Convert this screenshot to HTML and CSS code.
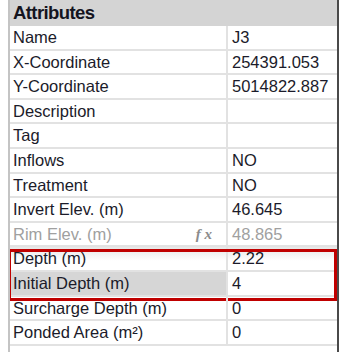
FILE: index.html
```html
<!DOCTYPE html>
<html lang="en">
<head>
    <meta charset="UTF-8">
    <title>Junction J3</title>
    <link rel="stylesheet" href="styles.css">
</head>
<body>
    <div class="panel">
        <div class="panel-header">Attributes</div>
        <div class="row"><div class="label">Name</div><div class="value">J3</div></div>
        <div class="row"><div class="label">X-Coordinate</div><div class="value">254391.053</div></div>
        <div class="row"><div class="label">Y-Coordinate</div><div class="value">5014822.887</div></div>
        <div class="row"><div class="label">Description</div><div class="value"></div></div>
        <div class="row"><div class="label">Tag</div><div class="value"></div></div>
        <div class="row"><div class="label">Inflows</div><div class="value">NO</div></div>
        <div class="row"><div class="label">Treatment</div><div class="value">NO</div></div>
        <div class="row"><div class="label">Invert Elev. (m)</div><div class="value">46.645</div></div>
        <div class="row disabled"><div class="label">Rim Elev. (m)<span class="fx">f x</span></div><div class="value">48.865</div></div>
        <div class="highlight">
            <div class="row shaded"><div class="label">Depth (m)</div><div class="value">2.22</div></div>
            <div class="row selected"><div class="label">Initial Depth (m)</div><div class="value">4</div></div>
        </div>
        <div class="row"><div class="label">Surcharge Depth (m)</div><div class="value">0</div></div>
        <div class="row"><div class="label">Ponded Area (m²)</div><div class="value">0</div></div>
    </div>
</body>
</html>
```

FILE: styles.css
```css
body {
    margin: 0;
    background-color: #ffffff;
    font-family: "Liberation Sans", Arial, sans-serif;
    font-size: 16.5px;
    color: #1b1b2a;
}

.panel {
    width: 331px;
    height: 352px;
    margin-left: 8px;
    border-left: 2px solid #c4c4c4;
    border-right: 2px solid #4a4a4a;
    box-sizing: border-box;
    overflow: hidden;
}

.panel-header {
    height: 26px;
    line-height: 26px;
    padding-left: 3px;
    background-color: #d4d4d4;
    font-weight: bold;
    font-size: 18.5px;
    letter-spacing: -0.6px;
    color: #14141f;
}

.row {
    display: flex;
    height: 24.6px;
    border-bottom: 2px solid #e2e2e2;
    box-sizing: border-box;
}

.label {
    position: relative;
    width: 213px;
    flex-shrink: 0;
    padding-left: 3px;
    line-height: 23px;
    border-right: 2px solid #e2e2e2;
    white-space: nowrap;
}

.value {
    flex: 1;
    padding-left: 4px;
    line-height: 23px;
}

.disabled {
    color: #a0a0a0;
}

.fx {
    position: absolute;
    right: 14px;
    top: 0;
    font-family: "Liberation Serif", serif;
    font-style: italic;
    font-weight: bold;
    font-size: 15px;
    color: #8c8c8c;
}

.shaded {
    background: linear-gradient(#e6e6e6, #ffffff 60%);
}

.selected .label {
    background-color: #d6d6d6;
}

/* red annotation box round the two depth rows */
.highlight {
    position: relative;
}

.highlight::after {
    content: "";
    position: absolute;
    left: -2px;
    top: 2px;
    width: 329px;
    height: 52px;
    border: 3px solid #c00000;
    box-sizing: border-box;
}
```
